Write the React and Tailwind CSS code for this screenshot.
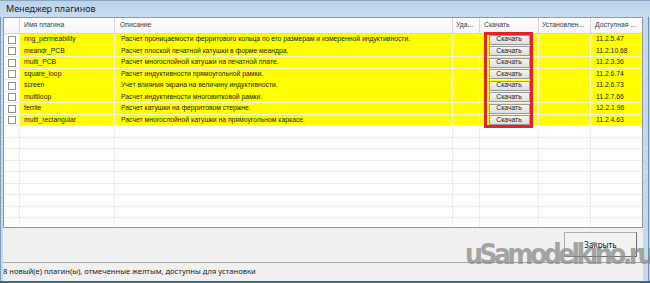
import React from "react";

const rows = [
  ["ring_permeability", "Расчет проницаемости ферритового кольца по его размерам и измеренной индуктивности.", "11.2.5.47"],
  ["meandr_PCB", "Расчет плоской печатной катушки в форме меандра.", "11.2.10.68"],
  ["multi_PCB", "Расчет многослойной катушки на печатной плате.", "11.2.3.36"],
  ["square_loop", "Расчет индуктивности прямоугольной рамки.", "11.2.6.74"],
  ["screen", "Учет влияния экрана на величину индуктивности.", "11.2.6.73"],
  ["multiloop", "Расчет индуктивности многовитковой рамки.", "11.2.7.66"],
  ["ferrite", "Расчет катушки на ферритовом стержне.", "12.2.1.96"],
  ["multi_rectangular", "Расчет многослойной катушки на прямоугольном каркасе.", "11.2.4.63"],
];

const heights = ["h-[12px]", "h-[11px]", "h-[12px]", "h-[11px]", "h-[12px]", "h-[11px]", "h-[12px]", "h-[11px]"];
const emptyHeights = ["h-[12px]", "h-[11px]", "h-[12px]", "h-[11px]", "h-[12px]", "h-[11px]", "h-[12px]", "h-[11px]", "h-[12px]", "h-[11px]"];

const cellFont = { fontFamily: '"Liberation Sans", Arial, sans-serif' };

function Header() {
  return (
    <div className="flex h-[16px] bg-gradient-to-b from-white to-[#f3f4f6] border-b border-[#d5d5d5] text-[6.8px] text-[#3c3c3c] leading-none" style={cellFont}>
      <div className="w-[16px] border-r border-[#d5d5d5]" />
      <div className="w-[95px] border-r border-[#d5d5d5] pl-[4px] flex items-center">Имя плагина</div>
      <div className="w-[338px] border-r border-[#d5d5d5] pl-[5px] flex items-center">Описание</div>
      <div className="w-[27px] border-r border-[#d5d5d5] pl-[3px] flex items-center">Уда...</div>
      <div className="w-[59px] border-r border-[#d5d5d5] pl-[4px] flex items-center">Скачать</div>
      <div className="w-[52px] border-r border-[#d5d5d5] pl-[3px] flex items-center whitespace-nowrap">Установлен...</div>
      <div className="w-[51px] pl-[4px] flex items-center whitespace-nowrap">Доступная ...</div>
    </div>
  );
}

function Row({ r, h }) {
  return (
    <div className={`flex ${h} text-[6.8px] text-[#1a1a1a] leading-none`} style={cellFont}>
      <div className="w-[16px] border-r border-b border-[#ececec] bg-white flex items-center justify-center">
        <div className="w-[8px] h-[8px] border border-[#8f8f8f] bg-white" />
      </div>
      <div className="w-[95px] border-r border-b border-[#f4f4d8] bg-[#ffff00] pl-[4px] flex items-center">{r[0]}</div>
      <div className="w-[338px] border-r border-b border-[#f4f4d8] bg-[#ffff00] pl-[6px] flex items-center whitespace-nowrap">{r[1]}</div>
      <div className="w-[27px] border-r border-b border-[#f4f4d8] bg-[#ffff00]" />
      <div className="w-[59px] border-r border-b border-[#f4f4d8] bg-[#ffff00] flex items-center justify-center">
        <div className="w-[41px] h-[10px] border border-[#9a9a9a] bg-gradient-to-b from-[#f4f4f4] to-[#dedede] flex items-center justify-center text-[#222]">Скачать</div>
      </div>
      <div className="w-[52px] border-r border-b border-[#f4f4d8] bg-[#ffff00]" />
      <div className="w-[51px] border-b border-[#f4f4d8] bg-[#ffff00] pl-[5px] flex items-center">{r[2]}</div>
    </div>
  );
}

function EmptyRow({ h }) {
  return (
    <div className={`flex ${h}`}>
      <div className="w-[16px] border-r border-b border-[#ececec]" />
      <div className="w-[95px] border-r border-b border-[#ececec]" />
      <div className="w-[338px] border-r border-b border-[#ececec]" />
      <div className="w-[27px] border-r border-b border-[#ececec]" />
      <div className="w-[59px] border-r border-b border-[#ececec]" />
      <div className="w-[52px] border-r border-b border-[#ececec]" />
      <div className="w-[51px] border-b border-[#ececec]" />
    </div>
  );
}

export default function App() {
  return (
    <div className="relative w-[650px] h-[283px] overflow-hidden bg-[#c4d9ef] flex flex-col">
      <div className="h-[17px] flex items-center pl-[6px] text-[9px] text-[#1b1b1b] bg-gradient-to-b from-[#bcd3ec] to-[#c8dcf1] border-t border-[#8aa6c2]" style={{ fontFamily: '"Noto Sans", "Open Sans", sans-serif' }}>
        Менеджер плагинов
      </div>
      <div className="flex flex-1 min-h-0">
        <div className="w-[3px] flex">
          <div className="w-[1px] bg-[#7f9cba]" />
          <div className="w-[2px] bg-[#c4d9ef]" />
        </div>
        <div className="w-[640px] flex flex-col">
          <div className="relative h-[211px] border border-[#8e9aa8] bg-white overflow-hidden">
            <Header />
            {rows.map((r, i) => (
              <Row key={i} r={r} h={heights[i]} />
            ))}
            {emptyHeights.map((h, i) => (
              <EmptyRow key={i} h={h} />
            ))}
            <div className="absolute left-[480px] top-[14px] w-[49px] h-[96px] border-[3px] border-[#e3222e]" />
          </div>
          <div className="h-[34px] bg-[#f0f0f0] flex justify-end items-start pt-[4px] pr-[6px]">
            <div className="w-[73px] h-[25px] border border-[#adadad] border-r-[#6f6f6f] border-b-[#6f6f6f] bg-[#f2f2f2] flex items-center justify-center text-[8px] text-[#111]" style={{ fontFamily: '"Noto Sans", "Open Sans", sans-serif' }}>
              Закрыть
            </div>
          </div>
          <div className="h-[1px] bg-[#a9a9a9]" />
          <div className="h-[18px] bg-[#f0f0f0] flex items-center text-[7.6px] text-[#222]" style={{ fontFamily: '"Noto Sans", "Open Sans", sans-serif' }}>
            8 новый(е) плагин(ы), отмеченные желтым, доступны для установки
          </div>
        </div>
        <div className="w-[7px] flex">
          <div className="w-[5px] bg-[#c4d9ef]" />
          <div className="w-[1px] bg-[#6f8eac]" />
          <div className="w-[1px] bg-[#c4d9ef]" />
        </div>
      </div>
      <div className="h-[2px] bg-[#3d6b7f]" />
      <div
        className="absolute left-[465px] top-[241px] text-[28px] font-bold text-[#8a8a8a] opacity-75 tracking-[-3.6px] leading-none whitespace-nowrap"
        style={{ fontFamily: '"DejaVu Sans Condensed", "DejaVu Sans", sans-serif' }}
      >
        uSamodelkino.ru
      </div>
    </div>
  );
}
